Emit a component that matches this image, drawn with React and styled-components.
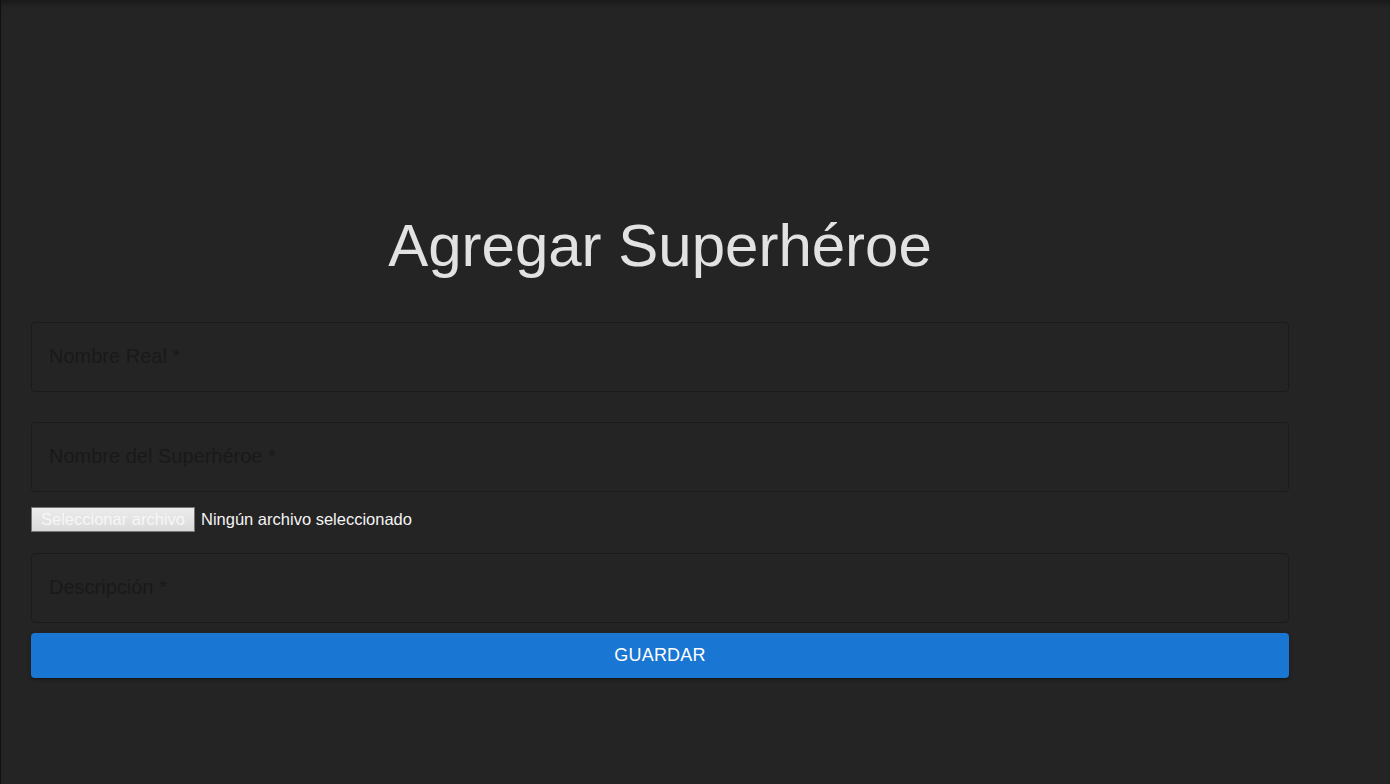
import React from "react";
import styled, { createGlobalStyle } from "styled-components";

const GlobalStyle = createGlobalStyle`
  html, body {
    margin: 0;
    padding: 0;
    background: #242424;
  }
  body {
    font-family: "Liberation Sans", Arial, sans-serif;
  }
`;

const Page = styled.div`
  min-height: 100vh;
  box-sizing: border-box;
  border-left: 1px solid #101014;
  background: #242424;
  box-shadow: inset 0 7px 7px -5px rgba(0, 0, 0, 0.45);
  padding: 210px 0 0 30px;
`;

const Form = styled.form`
  width: 1258px;
  display: flex;
  flex-direction: column;
`;

const Title = styled.h2`
  margin: 0 0 40px;
  text-align: center;
  font-size: 60px;
  line-height: 72px;
  font-weight: 400;
  color: #e2e2e2;
`;

const Field = styled.input`
  box-sizing: border-box;
  height: 70px;
  margin-top: ${(props) => props.$gap}px;
  padding: 0 17px 2px;
  background: transparent;
  border: 1px solid #1b1b1b;
  border-radius: 4px;
  font-family: inherit;
  font-size: 20px;
  color: #e2e2e2;
  outline: none;

  &::placeholder {
    color: #191919;
    opacity: 1;
  }
`;

const FileRow = styled.div`
  display: flex;
  align-items: center;
  gap: 6px;
  margin-top: 15px;
  height: 25px;
`;

const FileButton = styled.button`
  box-sizing: border-box;
  height: 25px;
  padding: 0 9px;
  border: 1px solid #767676;
  border-radius: 0;
  background: linear-gradient(#ececec, #dadada);
  color: #f7f7f7;
  font-family: inherit;
  font-size: 16.5px;
  cursor: pointer;
`;

const FileLabel = styled.span`
  color: #f4f4f4;
  font-size: 16.5px;
`;

const Submit = styled.button`
  margin-top: 10px;
  height: 45px;
  border: none;
  border-radius: 4px;
  background: #1976d2;
  color: #ffffff;
  font-family: inherit;
  font-size: 18px;
  letter-spacing: 0.2px;
  text-transform: uppercase;
  box-shadow: 0 3px 1px -2px rgba(0, 0, 0, 0.2), 0 2px 2px 0 rgba(0, 0, 0, 0.14),
    0 1px 5px 0 rgba(0, 0, 0, 0.12);
  cursor: pointer;
`;

const App = () => {
  const handleSubmit = (event) => {
    event.preventDefault();
  };

  return (
    <>
      <GlobalStyle />
      <Page>
        <Form onSubmit={handleSubmit}>
          <Title>Agregar Superhéroe</Title>
          <Field $gap={0} placeholder="Nombre Real *" />
          <Field $gap={30} placeholder="Nombre del Superhéroe *" />
          <FileRow>
            <FileButton type="button">Seleccionar archivo</FileButton>
            <FileLabel>Ningún archivo seleccionado</FileLabel>
          </FileRow>
          <Field $gap={21} placeholder="Descripción *" />
          <Submit type="submit">Guardar</Submit>
        </Form>
      </Page>
    </>
  );
};

export default App;
